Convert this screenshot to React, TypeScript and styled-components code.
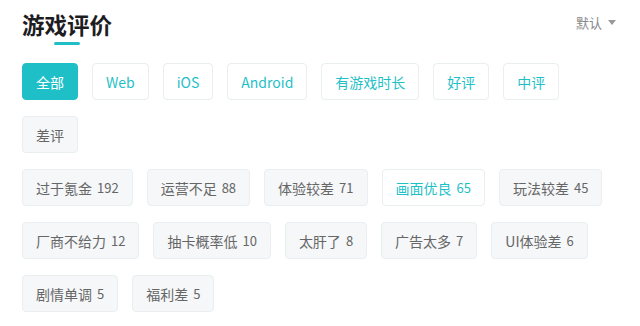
import styled, { createGlobalStyle, css } from "styled-components";

const GlobalStyle = createGlobalStyle`
  body {
    margin: 0;
    background: #fff;
    font-family: "Noto Sans CJK SC", "Noto Sans", sans-serif;
  }
`;

const TEAL = "#1fbfc7";

const Page = styled.div`
  width: 640px;
  box-sizing: border-box;
  padding: 8px 22px 0 22px;
`;

const Header = styled.div`
  display: flex;
  justify-content: space-between;
  align-items: flex-start;
  height: 55px;
`;

const TitleBox = styled.div`
  display: flex;
  flex-direction: column;
  align-items: center;
`;

const Title = styled.h2`
  margin: 0;
  font-size: 22.5px;
  line-height: 32px;
  font-weight: 700;
  color: #1d1d1f;
`;

const Underline = styled.div`
  width: 26px;
  height: 3px;
  margin-top: 2px;
  border-radius: 2px;
  background: ${TEAL};
`;

const Sort = styled.div`
  display: flex;
  align-items: center;
  gap: 6px;
  margin-top: 5px;
  margin-right: 2px;
  font-size: 13px;
  color: #888;
`;

const Caret = styled.span`
  width: 0;
  height: 0;
  border-left: 4px solid transparent;
  border-right: 4px solid transparent;
  border-top: 5px solid #999;
`;

const Group = styled.div`
  display: flex;
  flex-wrap: wrap;
  gap: 16px 14px;
  & + & {
    margin-top: 16px;
  }
`;

type Tone = "active" | "outline" | "plain";

const Chip = styled.button<{ $tone: Tone }>`
  display: inline-flex;
  align-items: center;
  height: 37px;
  padding: 0 13px;
  border-radius: 4px;
  border: 1px solid #e9eef0;
  font-family: inherit;
  font-size: 14px;
  cursor: pointer;
  ${({ $tone }) =>
    $tone === "active"
      ? css`
          background: ${TEAL};
          border-color: ${TEAL};
          color: #fff;
        `
      : $tone === "outline"
        ? css`
            background: #fff;
            color: ${TEAL};
          `
        : css`
            background: #f5f7f9;
            color: #666;
          `}
`;

const Count = styled.span`
  margin-left: 5px;
  font-size: 13px;
`;

const filters = ["全部", "Web", "iOS", "Android", "有游戏时长", "好评", "中评", "差评"];

const tags: [string, number][] = [
  ["过于氪金", 192],
  ["运营不足", 88],
  ["体验较差", 71],
  ["画面优良", 65],
  ["玩法较差", 45],
  ["厂商不给力", 12],
  ["抽卡概率低", 10],
  ["太肝了", 8],
  ["广告太多", 7],
  ["UI体验差", 6],
  ["剧情单调", 5],
  ["福利差", 5],
];

export default function App() {
  return (
    <Page>
      <GlobalStyle />
      <Header>
        <TitleBox>
          <Title>游戏评价</Title>
          <Underline />
        </TitleBox>
        <Sort>
          默认
          <Caret />
        </Sort>
      </Header>
      <Group>
        {filters.map((f, i) => (
          <Chip key={f} $tone={i === 0 ? "active" : i === 7 ? "plain" : "outline"}>
            {f}
          </Chip>
        ))}
      </Group>
      <Group>
        {tags.map(([name, n]) => (
          <Chip key={name} $tone={name === "画面优良" ? "outline" : "plain"}>
            {name}
            <Count>{n}</Count>
          </Chip>
        ))}
      </Group>
    </Page>
  );
}
